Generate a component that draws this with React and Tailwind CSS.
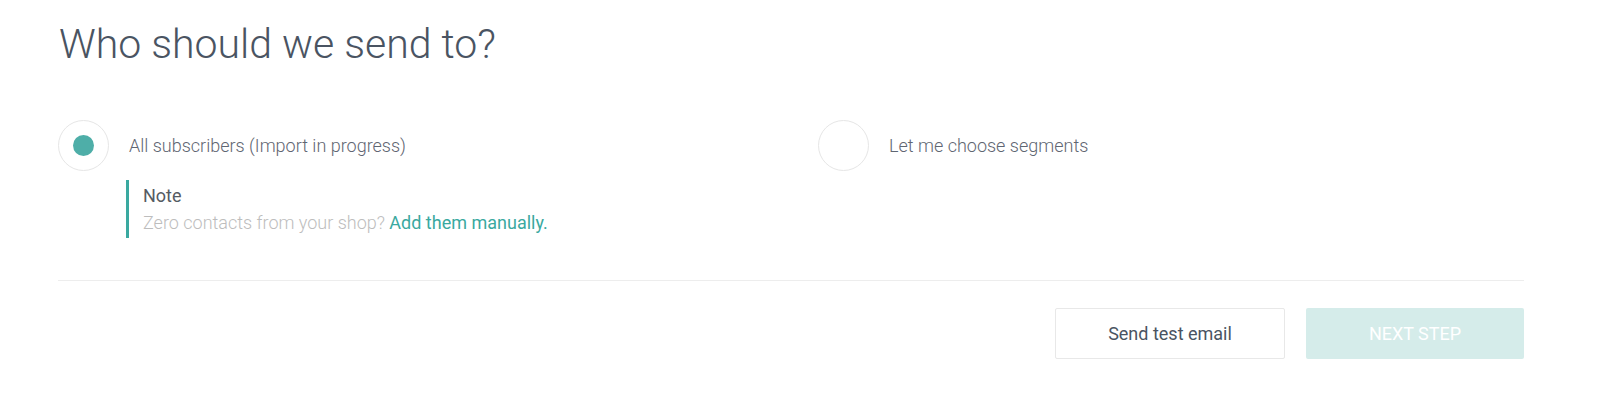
export default function App() {
  return (
    <div className="w-[1600px] h-[409px] bg-white" style={{ fontFamily: "Roboto, 'Open Sans', sans-serif" }}>
      <div className="pl-[58px] pr-[76px] pt-[14px]">
        <h1 className="text-[41px] leading-[60px] font-light text-[#4a5462] pl-[1px]">Who should we send to?</h1>
        <div className="flex mt-[46px]">
          <div className="w-[760px]">
            <label className="flex items-center">
              <span className="w-[51px] h-[51px] rounded-full border border-[#e6e6e6] flex items-center justify-center">
                <span className="w-[21px] h-[21px] rounded-full bg-[#4eaea8]"></span>
              </span>
              <span className="ml-[20px] text-[18px] font-light text-[#5f6672]">All subscribers (Import in progress)</span>
            </label>
            <div className="ml-[68px] mt-[9px] border-l-[3px] border-[#3aa9a0] pl-[14px] py-[2px]">
              <div className="text-[18px] leading-[27px] text-[#555b63] font-normal">Note</div>
              <div className="text-[18px] leading-[27px] font-light text-[#bdbdbd]">
                Zero contacts from your shop? <a className="text-[#3aa9a0] font-normal">Add them manually.</a>
              </div>
            </div>
          </div>
          <div>
            <label className="flex items-center">
              <span className="w-[51px] h-[51px] rounded-full border border-[#e6e6e6]"></span>
              <span className="ml-[20px] text-[18px] font-light text-[#5f6672]">Let me choose segments</span>
            </label>
          </div>
        </div>
        <div className="mt-[42px] border-t border-[#ededed]"></div>
        <div className="flex justify-end gap-[21px] mt-[27px]">
          <button className="w-[230px] h-[51px] border border-[#e8e8e8] rounded-[2px] text-[18px] text-[#4a5462] bg-white">Send test email</button>
          <button className="w-[218px] h-[51px] rounded-[2px] bg-[#d5ecea] text-[18px] text-white">NEXT STEP</button>
        </div>
      </div>
    </div>
  );
}
